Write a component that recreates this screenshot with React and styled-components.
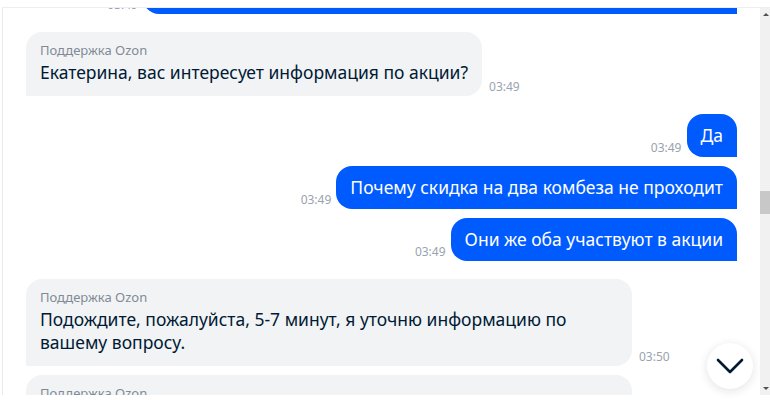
import React from "react";
import styled, { createGlobalStyle } from "styled-components";

const Global = createGlobalStyle`
  html, body { margin: 0; padding: 0; background: #fff; }
  body { font-family: "Noto Sans", "Open Sans", sans-serif; -webkit-font-smoothing: antialiased; }
  * { box-sizing: border-box; }
`;

const Page = styled.div`
  width: 770px;
  height: 412px;
  padding-top: 7px;
  background: #fff;
  overflow: hidden;
`;

const Panel = styled.div`
  position: relative;
  margin-left: 2px;
  height: 388px;
  display: flex;
  border-top: 1px solid #eceef1;
  border-left: 1px solid #e8eaed;
`;

const Feed = styled.div`
  flex: 1;
  overflow: hidden;
  padding: 0 23px;
`;

const List = styled.div`
  display: flex;
  flex-direction: column;
  gap: 18px;
`;

const Group = styled.div`
  display: flex;
  flex-direction: column;
  gap: 9px;
`;

const Row = styled.div`
  display: flex;
  align-items: flex-end;
  justify-content: ${(p) => (p.$out ? "flex-end" : "flex-start")};
  gap: ${(p) => (p.$out ? "5px" : "7px")};
`;

const Bubble = styled.div`
  max-width: 606px;
  padding: ${(p) => (p.$out ? "10px 14px" : "10px 14px 12px")};
  border-radius: ${(p) => (p.$out ? "16px 16px 0 16px" : "16px 16px 16px 0")};
  background: ${(p) => (p.$out ? "#005bff" : "#f2f3f5")};
  color: ${(p) => (p.$out ? "#ffffff" : "#001a34")};
`;

const Sender = styled.div`
  font-size: 13px;
  line-height: 16px;
  color: #7f8a96;
  margin-bottom: 3px;
`;

const Text = styled.div`
  font-size: 17.5px;
  line-height: 23px;
`;

const Time = styled.span`
  flex: none;
  font-size: 12px;
  line-height: 14px;
  color: #99a3ae;
  margin-bottom: 2px;
`;

const Scrollbar = styled.div`
  width: 10px;
  flex: none;
  background: #f1f1f1;
  display: flex;
  flex-direction: column;
  align-items: flex-end;
  padding: 5px 1px 5px 0;
`;

const Arrow = styled.div`
  width: 0;
  height: 0;
  border-left: 3px solid transparent;
  border-right: 3px solid transparent;
  ${(p) =>
    p.$down
      ? "border-top: 3px solid #505050; margin-top: auto;"
      : "border-bottom: 3px solid #505050;"}
`;

const Thumb = styled.div`
  align-self: stretch;
  margin: 175px -1px 0 0;
  height: 23px;
  background: #c8c8c8;
`;

const DownButton = styled.button`
  position: absolute;
  right: 17px;
  bottom: 6px;
  width: 46px;
  height: 46px;
  border-radius: 50%;
  border: none;
  background: #fff;
  box-shadow: 0 2px 10px rgba(0, 26, 52, 0.12);
  display: flex;
  align-items: center;
  justify-content: center;
  padding: 0;
  cursor: pointer;
`;

const messages = [
  {
    out: true,
    items: [
      {
        time: "03:49",
        text: "Здравствуйте, хотела уточнить по акции на детские комбинезоны.",
      },
    ],
  },
  {
    out: false,
    items: [{ time: "03:49", text: "Екатерина, вас интересует информация по акции?" }],
  },
  {
    out: true,
    items: [
      { time: "03:49", text: "Да" },
      { time: "03:49", text: "Почему скидка на два комбеза не проходит" },
      { time: "03:49", text: "Они же оба участвуют в акции" },
    ],
  },
  {
    out: false,
    items: [
      {
        time: "03:50",
        text: "Подождите, пожалуйста, 5-7 минут, я уточню информацию по вашему вопросу.",
      },
      {
        time: "03:52",
        text: "Спасибо за ожидание! Скидка по акции применяется только к товарам одного продавца.",
      },
    ],
  },
];

function Message({ out, time, text }) {
  return (
    <Row $out={out}>
      {out && <Time>{time}</Time>}
      <Bubble $out={out}>
        {!out && <Sender>Поддержка Ozon</Sender>}
        <Text>{text}</Text>
      </Bubble>
      {!out && <Time>{time}</Time>}
    </Row>
  );
}

export default function App() {
  const scrollOffset = 37;
  return (
    <>
      <Global />
      <Page>
        <Panel>
          <Feed>
            <List style={{ marginTop: -scrollOffset }}>
              {messages.map((g, i) => (
                <Group key={i}>
                  {g.items.map((m, j) => (
                    <Message key={j} out={g.out} time={m.time} text={m.text} />
                  ))}
                </Group>
              ))}
            </List>
          </Feed>
          <Scrollbar>
            <Arrow />
            <Thumb />
            <Arrow $down />
          </Scrollbar>
          <DownButton aria-label="Вниз">
            <svg width="28" height="16" viewBox="0 0 28 16" fill="none">
              <path
                d="M2 2l12 12L26 2"
                stroke="#001a34"
                strokeWidth="2.6"
                strokeLinecap="round"
                strokeLinejoin="round"
              />
            </svg>
          </DownButton>
        </Panel>
      </Page>
    </>
  );
}
